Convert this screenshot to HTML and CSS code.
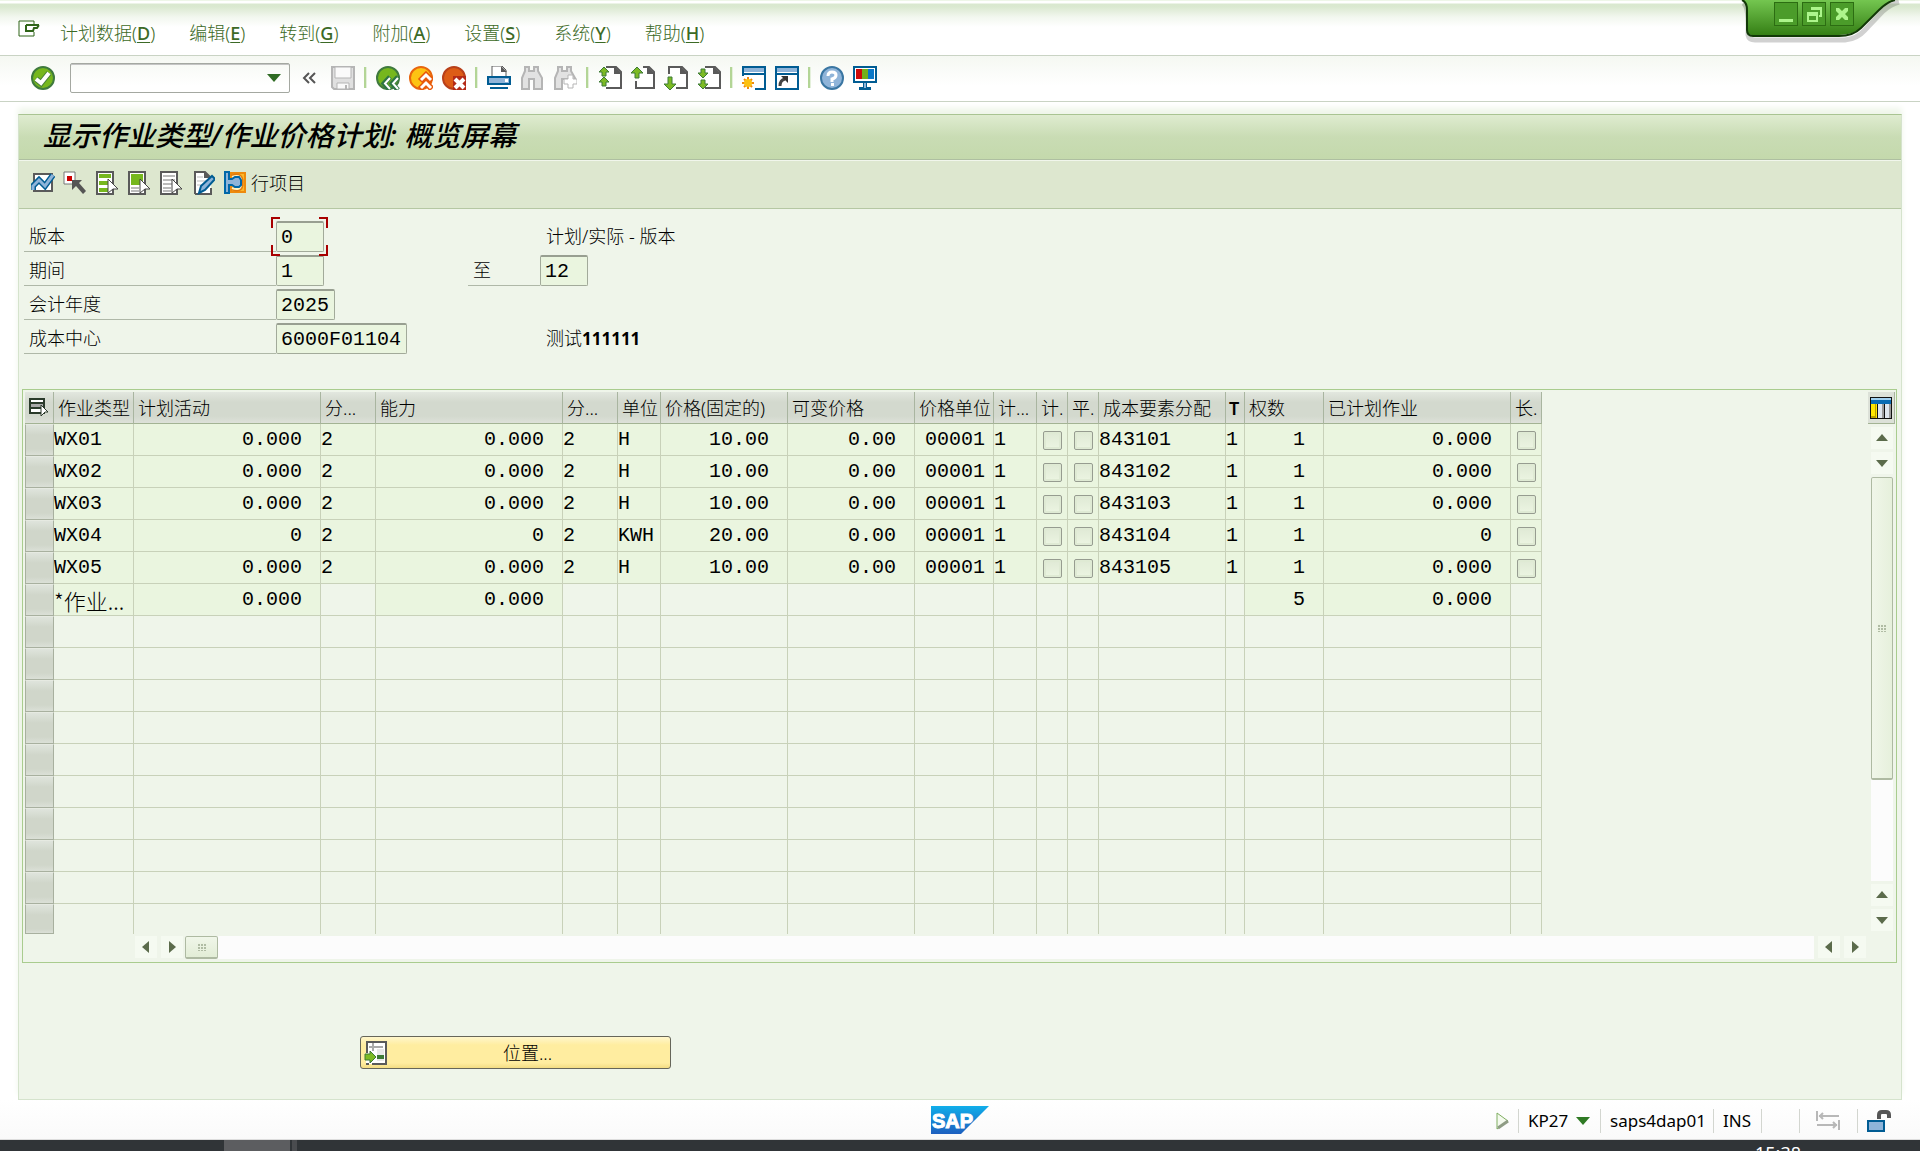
FILE: index.html
```html
<!DOCTYPE html>
<html lang="zh-CN">
<head>
<meta charset="utf-8">
<title>显示作业类型/作业价格计划: 概览屏幕</title>
<link rel="stylesheet" href="styles.css">
</head>
<body>
<header class="menubar">
  <svg class="menu-icon" width="24" height="18" viewBox="0 0 24 18" fill="none" stroke="#2f6418"><path d="M16 5V1H1V16H16V12" stroke-width="1"/><path d="M8 5H21M8 5V11H15L16 8H19L21 5" stroke-width="2"/></svg>
  <nav class="menus">
    <a href="#">计划数据(<u>D</u>)</a><a href="#">编辑(<u>E</u>)</a><a href="#">转到(<u>G</u>)</a><a href="#">附加(<u>A</u>)</a><a href="#">设置(<u>S</u>)</a><a href="#">系统(<u>Y</u>)</a><a href="#">帮助(<u>H</u>)</a>
  </nav>
  <div class="window-controls">
    <svg class="window-shape" width="180" height="44" viewBox="0 0 180 44">
      <defs><linearGradient id="tab" x1="0" y1="0" x2="0" y2="1"><stop offset="0" stop-color="#74c650"/><stop offset="1" stop-color="#357f15"/></linearGradient></defs>
      <path d="M4 3Q10 6 9 35Q10 40 16 40H106Q118 39 126 30L144 11Q152 4 160 2" fill="none" stroke="#000" stroke-opacity=".18" stroke-width="5"/>
      <path d="M3 0Q8 2 8 10V30Q8 35 13 35H100Q114 35 122 28L140 10Q148 2 156 0Z" fill="url(#tab)"/>
      <path d="M3 0Q8 2 8 10V30Q8 36 14 36H100Q114 36 122 28L140 10Q148 2 156 0" fill="none" stroke="#123907" stroke-width="2"/>
    </svg>
    <div class="window-buttons">
      <button type="button" aria-label="最小化"><svg width="22" height="22" viewBox="0 0 22 22"><path d="M4 16H18V19H4Z"/></svg></button>
      <button type="button" aria-label="还原"><svg width="22" height="22" viewBox="0 0 22 22"><path d="M8 4H19V14H16V12H17V7H8Z"/><path d="M4 9H15V19H4ZM6 13V17H13V13Z" fill-rule="evenodd"/></svg></button>
      <button type="button" aria-label="关闭"><svg width="22" height="22" viewBox="0 0 22 22"><path d="M5 5H8L11 8L14 5H17V8L14 11L17 14V17H14L11 14L8 17H5V14L8 11L5 8Z"/></svg></button>
    </div>
  </div>
</header>

<div class="toolbar">
  <button class="tool" type="button" aria-label="回车"><svg width="24" height="24" viewBox="0 0 24 24"><circle cx="12" cy="12" r="11" fill="#76b71e" stroke="#3f7a3e" stroke-width="2"/><path d="M5 13L10 17L18 7" fill="none" stroke="#48803a" stroke-width="6"/><path d="M5 13L10 17L18 7" fill="none" stroke="#fff" stroke-width="4"/></svg></button>
  <div class="command"><input type="text" aria-label="命令"><svg width="14" height="8" viewBox="0 0 14 8"><path d="M0 0H14L7 8Z" fill="#2f6b24"/></svg></div>
  <button class="tool chevron" type="button" aria-label="收起"><svg width="14" height="12" viewBox="0 0 14 12" fill="none" stroke="#555" stroke-width="2"><path d="M7 1L2 6L7 11M13 1L8 6L13 11"/></svg></button>
  <button class="tool save" type="button" aria-label="保存"><svg width="24" height="24" viewBox="0 0 24 24"><path d="M1 1H23V23H3L1 21Z" fill="#e0e0e0" stroke="#b5b5b5" stroke-width="2"/><path d="M4 1H20V12H4ZM6 17H18V23H6Z" fill="#fafafa" stroke="#b5b5b5"/><path d="M15 19V23" stroke="#b5b5b5" stroke-width="2"/></svg></button>
  <span class="sep"></span>
  <button class="tool" type="button" aria-label="返回"><svg width="24" height="24" viewBox="0 0 24 24"><circle cx="12" cy="12" r="11" fill="#76b71e" stroke="#3f7a3e" stroke-width="2"/><path d="M14 11L8 17.500L14 24M22 11L16 17.500L22 24" fill="none" stroke="#2f7544" stroke-width="5"/><path d="M14 12L9 17.500L14 23M22 12L17 17.500L22 23" fill="none" stroke="#fff" stroke-width="2"/></svg></button>
  <button class="tool" type="button" aria-label="退出"><svg width="24" height="24" viewBox="0 0 24 24"><circle cx="12" cy="12" r="11" fill="#fdc313" stroke="#e8650d" stroke-width="2"/><path d="M11 15L17 9L23 15M11 23L17 17L23 23" fill="none" stroke="#e8590b" stroke-width="6"/><path d="M12 14L17 9L22 14M12 22L17 17L22 22" fill="none" stroke="#fff" stroke-width="3"/></svg></button>
  <button class="tool" type="button" aria-label="取消"><svg width="24" height="24" viewBox="0 0 24 24"><circle cx="12" cy="12" r="11" fill="#dd5c16" stroke="#b8401a" stroke-width="2"/><path d="M11 10H24V24H11Z" fill="#b42a17"/><path d="M13 13L22 22M22 13L13 22" stroke="#fff" stroke-width="4"/></svg></button>
  <span class="sep"></span>
  <button class="tool" type="button" aria-label="打印"><svg width="24" height="24" viewBox="0 0 24 24"><path d="M5 11V0H15L19 4V11" fill="#fff" stroke="#5a5a5a" stroke-width="1"/><path d="M14 0L20 6H14Z" fill="#5a5a5a"/><path d="M1 11H23V18H1Z" fill="#8fb4d9" stroke="#005c93" stroke-width="2"/><path d="M18 13H21V16H18Z" fill="#fff"/><path d="M3 21H21V23H3Z" fill="#005c93"/></svg></button>
  <button class="tool" type="button" aria-label="查找"><svg width="24" height="24" viewBox="0 0 24 24"><path d="M5 1H9V5H14V1H18V5L22 12V23H14V13H9V23H2V12L5 5Z" fill="#e2e2e2" stroke="#b5b5b5" stroke-width="2"/></svg></button>
  <button class="tool" type="button" aria-label="查找下一个"><svg width="24" height="24" viewBox="0 0 24 24"><path d="M5 1H9V5H14V1H18V5L22 12V17H14V13H9V23H2V12L5 5Z" fill="#e2e2e2" stroke="#b5b5b5" stroke-width="2"/><path d="M15 9H20V13H24V18H20V22H15V18H11V13H15Z" fill="#fff" stroke="#b5b5b5"/></svg></button>
  <span class="sep"></span>
  <button class="tool" type="button" aria-label="第一页"><svg width="24" height="24" viewBox="0 0 24 24"><path d="M8 1H18L23 6V22H8" fill="#fff" stroke="#5a5a5a" stroke-width="2"/><path d="M16 0L24 8H16Z" fill="#5a5a5a"/><path d="M6 1L11 6H8V10H4V6H1ZM6 11L11 16H8V20H4V16H1Z" fill="#7cba24" stroke="#3d7a36"/></svg></button>
  <button class="tool" type="button" aria-label="上一页"><svg width="24" height="24" viewBox="0 0 24 24"><path d="M12 1H18L23 6V22H5V15" fill="#fff" stroke="#5a5a5a" stroke-width="2"/><path d="M16 0L24 8H16Z" fill="#5a5a5a"/><path d="M6 1L12 7H8V12H4V7H0Z" fill="#7cba24" stroke="#3d7a36"/></svg></button>
  <button class="tool" type="button" aria-label="下一页"><svg width="24" height="24" viewBox="0 0 24 24"><path d="M5 8V1H18L23 6V22H12" fill="#fff" stroke="#5a5a5a" stroke-width="2"/><path d="M16 0L24 8H16Z" fill="#5a5a5a"/><path d="M6 24L12 18H8V11H4V18H0Z" fill="#7cba24" stroke="#3d7a36"/></svg></button>
  <button class="tool" type="button" aria-label="最后一页"><svg width="24" height="24" viewBox="0 0 24 24"><path d="M8 1H18L23 6V22H8" fill="#fff" stroke="#5a5a5a" stroke-width="2"/><path d="M16 0L24 8H16Z" fill="#5a5a5a"/><path d="M6 12L11 7H8V3H4V7H1ZM6 23L11 18H8V14H4V18H1Z" fill="#7cba24" stroke="#3d7a36"/></svg></button>
  <span class="sep"></span>
  <button class="tool" type="button" aria-label="新建会话"><svg width="24" height="24" viewBox="0 0 24 24"><path d="M1 1H23V23H1Z" fill="#fff"/><path d="M1 10V1H23V23H13" fill="none" stroke="#005c93" stroke-width="2"/><path d="M2 2H22V6H2Z" fill="#8fb4d9"/><path d="M1 7H23V9H1Z" fill="#005c93"/><path d="M6 11V23M0 17H12M2 13L10 21M10 13L2 21" stroke="#f08a0c" stroke-width="2"/><circle cx="6" cy="17" r="4" fill="#fcc111"/></svg></button>
  <button class="tool" type="button" aria-label="创建快捷方式"><svg width="24" height="24" viewBox="0 0 24 24"><path d="M1 1H23V23H1Z" fill="#fff" stroke="#005c93" stroke-width="2"/><path d="M2 2H22V6H2Z" fill="#8fb4d9"/><path d="M1 7H23V9H1Z" fill="#005c93"/><path d="M5 20Q5 14 10 13" fill="none" stroke="#444" stroke-width="3"/><path d="M6 10H13V17Z" fill="#333"/></svg></button>
  <span class="sep"></span>
  <button class="tool" type="button" aria-label="帮助"><svg width="24" height="24" viewBox="0 0 24 24"><circle cx="12" cy="12" r="11" fill="#8fb4d9" stroke="#3a76a2" stroke-width="2"/><path d="M8 10Q8 6 12 6Q16 6 16 9Q16 12 12 13V16" fill="none" stroke="#fff" stroke-width="3"/><path d="M11 17H14V20H11Z" fill="#fff"/></svg></button>
  <button class="tool" type="button" aria-label="定制本地布局"><svg width="24" height="24" viewBox="0 0 24 24"><path d="M1 1H23V16H1Z" fill="#fff" stroke="#005c93" stroke-width="2"/><path d="M3 3H9V13H3Z" fill="#cc0a0a"/><path d="M9 3H15V13H9Z" fill="#73b11a"/><path d="M15 3H21V13H15Z" fill="#0a78c8"/><path d="M10 17H14V21H18V24H6V21H10Z" fill="#005c93"/><path d="M11 17H13V22H11Z" fill="#8fb4d9"/></svg></button>
</div>

<main class="screen">
  <h1 class="title">显示作业类型/作业价格计划: 概览屏幕</h1>
  <div class="app-toolbar">
    <button class="tool" type="button" aria-label="图形"><svg width="24" height="24" viewBox="0 0 24 24"><path d="M3 3H21V20H3Z" fill="#fff" stroke="#5a5a5a" stroke-width="2"/><path d="M2 19V15L8 9L14 15L22 4" fill="none" stroke="#005c93" stroke-width="6"/><path d="M2 19V15L8 9L14 15L22 4" fill="none" stroke="#8fb4d9" stroke-width="3"/></svg></button>
    <button class="tool" type="button" aria-label="选择"><svg width="24" height="24" viewBox="0 0 24 24"><path d="M1 1H12V13H1Z" fill="#fff" stroke="#777"/><path d="M4 5H9V10H4Z" fill="#c00"/><path d="M9 9H19L16 12L23 20L20 23L13 15L9 19Z" fill="#555"/></svg></button>
    <button class="tool" type="button" aria-label="全选"><svg width="24" height="24" viewBox="0 0 24 24"><path d="M2 1H18V23H2Z" fill="#fff" stroke="#5a5a5a" stroke-width="2"/><path d="M4 3H16V7H4ZM4 10H16V14H4ZM4 17H13V21H4Z" fill="#76b71e"/><path d="M13 8L23 18H18L13 22Z" fill="#fff" stroke="#444"/></svg></button>
    <button class="tool" type="button" aria-label="选择块"><svg width="24" height="24" viewBox="0 0 24 24"><path d="M2 1H18V23H2Z" fill="#fff" stroke="#5a5a5a" stroke-width="2"/><path d="M4 3H16V14H4Z" fill="#76b71e"/><path d="M4 17H12M4 20H12" stroke="#bbb" stroke-width="2"/><path d="M13 8L23 18H18L13 22Z" fill="#fff" stroke="#444"/></svg></button>
    <button class="tool" type="button" aria-label="取消全选"><svg width="24" height="24" viewBox="0 0 24 24"><path d="M2 1H18V23H2Z" fill="#fff" stroke="#5a5a5a" stroke-width="2"/><path d="M4 5H16M4 9H16M4 13H14M4 17H12M4 20H12" stroke="#bbb" stroke-width="2"/><path d="M13 8L23 18H18L13 22Z" fill="#fff" stroke="#444"/></svg></button>
    <button class="tool" type="button" aria-label="长文本"><svg width="24" height="24" viewBox="0 0 24 24"><path d="M4 1H14L20 7V23H4Z" fill="#fff"/><path d="M4 23V1H14L20 7V10M20 17V23H4" fill="none" stroke="#5a5a5a" stroke-width="2"/><path d="M13 0L20 7H13Z" fill="#5a5a5a"/><path d="M6 6H12M6 10H15M6 14H12" stroke="#bbb"/><path d="M8 22L10 15L21 5L24 8L14 19Z" fill="#8fb4d9" stroke="#005c93" stroke-width="2"/></svg></button>
    <button class="tool tool-text" type="button"><svg width="24" height="24" viewBox="0 0 24 24"><path d="M8 2H22V21H8Z" fill="#fdb92a" stroke="#ee8a0c" stroke-width="2"/><path d="M9 6Q17 3 18 9V14Q17 20 9 17" fill="none" stroke="#e07a10" stroke-width="5"/><path d="M9 6Q17 3 18 9V14Q17 20 9 17" fill="none" stroke="#fff3c0" stroke-width="2"/><path d="M2 1H6V8H9L12 6H16L18 9V14L16 16H12L9 14H6V22H2Z" fill="#8fb4d9" stroke="#0067a8" stroke-width="2"/></svg><span>行项目</span></button>
  </div>

  <form class="params">
    <div class="param"><label class="name" for="version">版本</label><div class="slot"><div class="focus"><input id="version" class="box w-s" type="text" value="0" readonly><svg class="corners" width="57" height="39" viewBox="0 0 57 39" fill="none" stroke="#a80000" stroke-width="2"><path d="M1 11V1H9M48 1H56V11M56 28V38H48M9 38H1V28"/></svg></div></div><span class="note">计划/实际 - 版本</span></div>
    <div class="param"><label class="name" for="from">期间</label><div class="slot"><input id="from" class="box w-s" type="text" value="1" readonly></div><label class="to" for="to">至</label><input id="to" class="box w-s" type="text" value="12" readonly></div>
    <div class="param"><label class="name" for="year">会计年度</label><div class="slot"><input id="year" class="box w-m" type="text" value="2025" readonly></div></div>
    <div class="param"><label class="name" for="center">成本中心</label><div class="slot"><input id="center" class="box w-l" type="text" value="6000F01104" readonly></div><span class="note">测试<b>111111</b></span></div>
  </form>

  <section class="grid-frame">
    <div class="grid-row">
      <div class="grid-view">
        <table class="grid">
          <colgroup><col class="c-sel"><col class="c-80"><col class="c-187"><col class="c-55"><col class="c-187"><col class="c-55"><col class="c-43"><col class="c-127"><col class="c-127"><col class="c-79"><col class="c-43"><col class="c-31"><col class="c-31"><col class="c-127"><col class="c-19"><col class="c-79"><col class="c-187"><col class="c-31"></colgroup>
          <thead><tr><th class="sel"><svg width="20" height="20" viewBox="0 0 20 20"><path d="M1 1H15V5H1ZM1 5H15V10H1ZM1 10H15V15H1Z" fill="#fff" stroke="#2b3b2b" stroke-width="2"/><path d="M2 6H14V9H2Z" fill="#aaa"/><path d="M12 7L19 14H16L12 18Z" fill="#fff" stroke="#2b3b2b"/></svg></th><th>作业类型</th><th>计划活动</th><th>分...</th><th>能力</th><th>分...</th><th>单位</th><th>价格(固定的)</th><th>可变价格</th><th>价格单位</th><th>计...</th><th>计.</th><th>平.</th><th>成本要素分配</th><th class="t">T</th><th>权数</th><th>已计划作业</th><th>长.</th></tr></thead>
          <tbody>
            <tr class="on"><th></th><td>WX01</td><td class="n">0.000</td><td>2</td><td class="n">0.000</td><td>2</td><td>H</td><td class="n">10.00</td><td class="n">0.00</td><td class="u">00001</td><td>1</td><td><input type="checkbox" aria-label="计"></td><td><input type="checkbox" aria-label="平"></td><td>843101</td><td>1</td><td class="n">1</td><td class="n">0.000</td><td><input type="checkbox" aria-label="长"></td></tr>
            <tr class="on"><th></th><td>WX02</td><td class="n">0.000</td><td>2</td><td class="n">0.000</td><td>2</td><td>H</td><td class="n">10.00</td><td class="n">0.00</td><td class="u">00001</td><td>1</td><td><input type="checkbox" aria-label="计"></td><td><input type="checkbox" aria-label="平"></td><td>843102</td><td>1</td><td class="n">1</td><td class="n">0.000</td><td><input type="checkbox" aria-label="长"></td></tr>
            <tr class="on"><th></th><td>WX03</td><td class="n">0.000</td><td>2</td><td class="n">0.000</td><td>2</td><td>H</td><td class="n">10.00</td><td class="n">0.00</td><td class="u">00001</td><td>1</td><td><input type="checkbox" aria-label="计"></td><td><input type="checkbox" aria-label="平"></td><td>843103</td><td>1</td><td class="n">1</td><td class="n">0.000</td><td><input type="checkbox" aria-label="长"></td></tr>
            <tr class="on"><th></th><td>WX04</td><td class="n">0</td><td>2</td><td class="n">0</td><td>2</td><td>KWH</td><td class="n">20.00</td><td class="n">0.00</td><td class="u">00001</td><td>1</td><td><input type="checkbox" aria-label="计"></td><td><input type="checkbox" aria-label="平"></td><td>843104</td><td>1</td><td class="n">1</td><td class="n">0</td><td><input type="checkbox" aria-label="长"></td></tr>
            <tr class="on"><th></th><td>WX05</td><td class="n">0.000</td><td>2</td><td class="n">0.000</td><td>2</td><td>H</td><td class="n">10.00</td><td class="n">0.00</td><td class="u">00001</td><td>1</td><td><input type="checkbox" aria-label="计"></td><td><input type="checkbox" aria-label="平"></td><td>843105</td><td>1</td><td class="n">1</td><td class="n">0.000</td><td><input type="checkbox" aria-label="长"></td></tr>
            <tr><th></th><td class="f sum">*作业...</td><td class="f n">0.000</td><td></td><td class="f n">0.000</td><td></td><td></td><td></td><td></td><td></td><td></td><td></td><td></td><td></td><td></td><td class="f n">5</td><td class="f n">0.000</td><td></td></tr>
            <tr><th></th><td></td><td></td><td></td><td></td><td></td><td></td><td></td><td></td><td></td><td></td><td></td><td></td><td></td><td></td><td></td><td></td><td></td></tr>
            <tr><th></th><td></td><td></td><td></td><td></td><td></td><td></td><td></td><td></td><td></td><td></td><td></td><td></td><td></td><td></td><td></td><td></td><td></td></tr>
            <tr><th></th><td></td><td></td><td></td><td></td><td></td><td></td><td></td><td></td><td></td><td></td><td></td><td></td><td></td><td></td><td></td><td></td><td></td></tr>
            <tr><th></th><td></td><td></td><td></td><td></td><td></td><td></td><td></td><td></td><td></td><td></td><td></td><td></td><td></td><td></td><td></td><td></td><td></td></tr>
            <tr><th></th><td></td><td></td><td></td><td></td><td></td><td></td><td></td><td></td><td></td><td></td><td></td><td></td><td></td><td></td><td></td><td></td><td></td></tr>
            <tr><th></th><td></td><td></td><td></td><td></td><td></td><td></td><td></td><td></td><td></td><td></td><td></td><td></td><td></td><td></td><td></td><td></td><td></td></tr>
            <tr><th></th><td></td><td></td><td></td><td></td><td></td><td></td><td></td><td></td><td></td><td></td><td></td><td></td><td></td><td></td><td></td><td></td><td></td></tr>
            <tr><th></th><td></td><td></td><td></td><td></td><td></td><td></td><td></td><td></td><td></td><td></td><td></td><td></td><td></td><td></td><td></td><td></td><td></td></tr>
            <tr><th></th><td></td><td></td><td></td><td></td><td></td><td></td><td></td><td></td><td></td><td></td><td></td><td></td><td></td><td></td><td></td><td></td><td></td></tr>
            <tr class="last"><th></th><td></td><td></td><td></td><td></td><td></td><td></td><td></td><td></td><td></td><td></td><td></td><td></td><td></td><td></td><td></td><td></td><td></td></tr>
          </tbody>
        </table>
      </div>
      <div class="vscroll">
        <button class="config" type="button" aria-label="表设置"><svg width="22" height="22" viewBox="0 0 22 22"><path d="M0 0H22V22H0Z" fill="#111"/><path d="M1 1H21V3H1Z" fill="#9fd0f0"/><path d="M1 3H21V7H1Z" fill="#0a6cb4"/><path d="M1 7H7V21H1Z" fill="#ffe600"/><path d="M8 7H14V21H8ZM15 7H21V21H15Z" fill="#dfe6ee"/><path d="M6 7V21H1V19H5V7Z" fill="#b8a000"/><path d="M12 7H14V21H12ZM19 7H21V21H19Z" fill="#999"/></svg></button>
        <button class="arrow" type="button" aria-label="向上"><svg width="12" height="8" viewBox="0 0 12 8"><path d="M0 7L6 0L12 7Z"/></svg></button>
        <button class="arrow" type="button" aria-label="向下"><svg width="12" height="8" viewBox="0 0 12 8"><path d="M0 1L6 8L12 1Z"/></svg></button>
        <div class="vtrack"><div class="vthumb"><i class="grip"></i></div></div>
        <button class="arrow" type="button" aria-label="向上翻"><svg width="12" height="8" viewBox="0 0 12 8"><path d="M0 7L6 0L12 7Z"/></svg></button>
        <button class="arrow" type="button" aria-label="向下翻"><svg width="12" height="8" viewBox="0 0 12 8"><path d="M0 1L6 8L12 1Z"/></svg></button>
      </div>
    </div>
    <div class="hscroll">
      <button class="arrow" type="button" aria-label="向左"><svg width="8" height="12" viewBox="0 0 8 12"><path d="M7 0L0 6L7 12Z"/></svg></button>
      <button class="arrow" type="button" aria-label="向右"><svg width="8" height="12" viewBox="0 0 8 12"><path d="M1 0L8 6L1 12Z"/></svg></button>
      <div class="htrack"><div class="hthumb"><i class="grip"></i></div></div>
      <button class="arrow" type="button" aria-label="向左翻"><svg width="8" height="12" viewBox="0 0 8 12"><path d="M7 0L0 6L7 12Z"/></svg></button>
      <button class="arrow" type="button" aria-label="向右翻"><svg width="8" height="12" viewBox="0 0 8 12"><path d="M1 0L8 6L1 12Z"/></svg></button>
    </div>
  </section>

  <button class="position" type="button"><svg width="24" height="24" viewBox="0 0 24 24"><path d="M2 1H22V23H2Z" fill="#fff"/><path d="M3 12V1H22V23H8M2 23H5" fill="none" stroke="#5a5a5a" stroke-width="2"/><path d="M9 2V10M5 6H19" stroke="#aaa" stroke-width="2"/><path d="M13 8H20V20H13Z" fill="#e8e8e8"/><path d="M13 14H20V18H13Z" fill="#3d7a36"/><path d="M1 13H6V10L12 16L6 22V19H1Z" fill="#7cba24" stroke="#3d7a36"/></svg><span>位置...</span></button>
</main>

<footer class="statusbar">
  <svg class="logo" role="img" aria-label="SAP" width="58" height="28" viewBox="0 0 58 28"><defs><linearGradient id="sap" x1="0" y1="0" x2="0" y2="1"><stop offset="0" stop-color="#10aeea"/><stop offset="1" stop-color="#1d5fbf"/></linearGradient></defs><path d="M0 0H58L30 28H0Z" fill="url(#sap)"/><text x="1" y="22" class="logo-text">SAP</text></svg>
  <div class="status">
    <svg class="play" width="14" height="20" viewBox="0 0 14 20"><path d="M1 2L12 10L1 18Z" fill="#f4faee" stroke="#7fae60" stroke-width="1"/><path d="M12 10L2 17" stroke="#8f9c85" stroke-width="3"/></svg>
    <span class="cell tcode">KP27<svg width="14" height="8" viewBox="0 0 14 8"><path d="M0 0H14L7 8Z" fill="#2f7a24"/></svg></span>
    <span class="cell host">saps4dap01</span>
    <span class="cell ins">INS</span>
    <span class="cell blank"></span>
    <span class="cell swap"><svg width="24" height="20" viewBox="0 0 24 20" fill="none" stroke="#b8b8b8" stroke-width="2"><path d="M1 0V10M3 5H23M7 2L4 5L7 8M23 9V19M1 14H21M17 11L20 14L17 17"/></svg></span>
    <span class="cell lock"><svg width="24" height="24" viewBox="0 0 24 24"><path d="M12 10V6Q12 3 15 3H19Q22 3 22 6V9" fill="none" stroke="#555" stroke-width="4"/><path d="M1 12H17V22H1Z" fill="#8fb4d9" stroke="#005c93" stroke-width="2"/></svg></span>
  </div>
</footer>
<div class="taskbar"><span class="task"></span><span class="task-edge"></span><span class="clock">15:38</span></div>
</body>
</html>
```
FILE: styles.css
```css
* { box-sizing: border-box; }
:root {
  --ui: "Noto Sans", "Noto Sans CJK SC", sans-serif;
  --mono: "Liberation Mono", "Noto Sans CJK SC", monospace;
  --line: #c8d1b9;
}
body {
  margin: 0;
  min-height: 100vh;
  display: flex;
  flex-direction: column;
  background: #fff;
  color: #000;
  font: 300 18px/24px var(--ui);
}
button {
  padding: 0;
  border: 0;
  background: none;
  color: inherit;
  font: inherit;
}
svg { display: block; flex: none; }
input { border-radius: 0; margin: 0; font: inherit; }

.menubar {
  position: relative;
  display: flex;
  height: 56px;
  padding: 19px 18px 0;
  border-top: 1px solid #eef6e8;
  border-bottom: 1px solid #c9d3c4;
  background: linear-gradient(#fff 2px, #d9e8cf 3px, #dbe9d1 6px, #f2f7ef 16px, #fff 26px);
}
.menus { display: flex; gap: 34px; padding: 1px 0 0 18px; }
.menus a { color: #3c6a26; text-decoration: none; white-space: nowrap; }
.menus u { font-weight: 500; text-underline-offset: 2px; }

.window-controls { position: absolute; top: -1px; right: 1px; width: 180px; height: 44px; }
.window-shape { position: absolute; inset: 0; }
.window-buttons { position: relative; display: flex; gap: 4px; padding: 2px 0 0 35px; }
.window-buttons button { height: 24px; border: 1px solid #2c6d12; background: #4b9c2a; }
.window-buttons path { fill: #adf58c; }

.toolbar {
  display: flex;
  align-items: center;
  gap: 9px;
  height: 46px;
  padding: 4px 31px 6px;
  border-bottom: 1px solid #c9d3c4;
  background: linear-gradient(#f5f8f2, #fff 30px);
}
.toolbar .sep { width: 3px; height: 21px; background: linear-gradient(90deg, #b3d596 2px, #e4f0db 2px); }
.command {
  display: flex;
  align-items: center;
  width: 220px;
  height: 30px;
  margin-left: 6px;
  padding-right: 8px;
  border: 1px solid #a4a8a1;
  border-radius: 2px;
  box-shadow: inset 0 1px #c4c4c4;
}
.command input { flex: 1; min-width: 0; height: 26px; border: 0; background: none; outline: 0; }
.chevron { margin-left: 3px; }
.save { margin-left: 6px; }

.screen {
  flex: 1;
  display: flex;
  flex-direction: column;
  align-items: stretch;
  margin: 12px 18px 0;
  border: 1px solid #d5e3cd;
  border-top-color: #a9c492;
  background: #eff5ea;
  box-shadow: 0 -6px 6px #eff6ea;
}
.title {
  margin: 0;
  height: 45px;
  padding: 3px 24px 0;
  border-bottom: 1px solid #aebfa1;
  background: linear-gradient(#dfecd0, #c9dcb4 50%, #c4d9ac);
  font: italic 500 28px/34px "Noto Sans", "Noto Sans CJK SC", sans-serif;
}
.app-toolbar {
  display: flex;
  align-items: center;
  gap: 8px;
  height: 49px;
  padding: 0 12px 4px;
  border-top: 1px solid #f1f6ec;
  border-bottom: 1px solid #b5c7a3;
  background: #dde7cf;
}
.tool-text { display: flex; align-items: center; gap: 4px; }

.params { display: flex; flex-direction: column; gap: 3px; padding: 12px 0 0 5px; }
.param { display: flex; height: 31px; line-height: 30px; }
.name, .to { padding-left: 5px; border-bottom: 1px solid #afb8a8; }
.name { width: 252px; }
.to { width: 72px; }
.slot { width: 192px; }
.note { padding-left: 78px; }
.note b { font: 700 17px/30px "Noto Sans", sans-serif; }
.box {
  display: block;
  height: 31px;
  padding: 0 4px;
  border: 1px solid #a2aa9a;
  border-top: 2px solid #989f91;
  border-radius: 2px;
  outline: 0;
  background: #eaf5df;
  font: 20px/28px var(--mono);
}
.w-s { width: 48px; }
.w-m { width: 59px; }
.w-l { width: 131px; }
.focus { position: relative; width: 48px; }
.corners { position: absolute; left: -5px; top: -4px; }

.grid-frame {
  margin: 35px 4px 0 3px;
  padding: 2px 1px 3px 2px;
  border: 1px solid #a9cc8e;
}
.grid-row { display: flex; justify-content: space-between; }
.grid-view { min-width: 0; overflow: hidden; }
.grid { width: 1517px; table-layout: fixed; border-collapse: separate; border-spacing: 0; }
.c-sel { width: 29px; }
.c-19 { width: 19px; }
.c-31 { width: 31px; }
.c-43 { width: 43px; }
.c-55 { width: 55px; }
.c-79 { width: 79px; }
.c-80 { width: 80px; }
.c-127 { width: 127px; }
.c-187 { width: 187px; }
.grid th, .grid td { height: 32px; padding: 0; text-align: left; white-space: nowrap; overflow: hidden; }
.grid thead th {
  padding-left: 4px;
  border-right: 1px solid #a9b5a0;
  border-bottom: 1px solid #a3b394;
  background: linear-gradient(#e2e7df, #d3d9ce 10px, #d3d9ce 24px, #dde1d9);
  font-weight: 300;
}
.grid thead .t { padding-left: 3px; font-weight: 600; }
.grid tbody th {
  border: 1px solid #a8b09f;
  border-top-color: #e6eae2;
  background: linear-gradient(#dfe4dc, #d0d6ca 10px, #d0d6ca 24px, #dbe0d7);
}
.grid td {
  padding-top: 1px;
  border-right: 1px solid var(--line);
  border-bottom: 1px solid var(--line);
  font: 20px/30px var(--mono);
}
.grid .on td, .grid .f { background: #eaf5df; }
.grid .n { padding-right: 18px; text-align: right; }
.grid .u { padding-right: 8px; text-align: right; }
.grid .sum { padding-top: 0; font: 300 22px/28px "Noto Sans CJK SC", sans-serif; }
.grid .last th, .grid .last td { height: 30px; padding: 0; }
.grid .last td { border-bottom: 0; }
.grid input {
  appearance: none;
  display: block;
  width: 19px;
  height: 19px;
  margin: 0 0 0 6px;
  border: 1px solid #969c90;
  border-radius: 2px;
  background: linear-gradient(#dfe9d5, #ecf5e2);
  box-shadow: inset 0 0 0 2px #dfead4;
}

.vscroll { display: flex; flex-direction: column; align-items: center; width: 27px; padding-bottom: 3px; }
.config {
  display: grid;
  place-items: center;
  width: 27px;
  height: 32px;
  border-right: 1px solid #a9b5a0;
  border-bottom: 1px solid #a3b394;
  background: #dce1d8;
}
.arrow { display: grid; place-items: center; width: 22px; height: 22px; background: #f5faf1; }
.arrow path { fill: #5b6b4b; }
.vscroll .arrow { margin-top: 3px; }
.vtrack { flex: 1; width: 22px; margin-top: 3px; background: #fcfcfc; }
.vthumb, .hthumb { display: grid; place-items: center; border: 1px solid #aebaa2; border-radius: 2px; }
.vthumb { height: 75%; background: linear-gradient(90deg, #f0f6e9, #e6f0dc); border-bottom-width: 2px; }
.grip {
  width: 8px;
  height: 8px;
  background: repeating-linear-gradient(#eaf2e0 0 1px, transparent 1px 3px), repeating-linear-gradient(90deg, #b0bca4 0 2px, transparent 2px 3px);
}
.hscroll { display: flex; gap: 4px; height: 23px; margin-top: 2px; padding: 0 29px 0 110px; }
.htrack { flex: 1; margin-left: -2px; background: #fcfcfc; }
.hthumb { width: 33px; height: 23px; background: linear-gradient(#f0f6e9, #e2edd6); border-bottom-width: 2px; }

.position {
  display: flex;
  align-items: center;
  width: 311px;
  height: 33px;
  margin: 73px 0 24px 341px;
  padding: 0 3px;
  border: 1px solid #66665a;
  border-radius: 3px;
  background: linear-gradient(#fff6cc, #ffeda0 8px, #ffeda0 26px, #f3dc83);
}
.position span { flex: 1; text-align: center; }

.statusbar {
  position: relative;
  display: grid;
  grid-template-columns: 1fr auto 1fr;
  align-items: center;
  height: 40px;
  border-bottom: 1px solid #ddd;
  background: linear-gradient(#fff, #fafafa);
}
.logo { grid-column: 2; }
.logo-text { font: 700 20px "Liberation Sans", sans-serif; fill: #fff; stroke: #fff; stroke-width: 1px; }
.status { display: flex; justify-content: flex-end; align-items: center; padding: 2px 18px 0 0; line-height: 24px; font-size: 17px; font-weight: 400; }
.cell { display: flex; align-items: center; height: 24px; padding-left: 9px; border-left: 1px solid #d3d6d0; }
.play { margin-right: 8px; }
.tcode { width: 82px; gap: 8px; }
.host { width: 113px; }
.ins { width: 48px; }
.blank { width: 38px; }
.swap { width: 58px; padding-left: 16px; }
.lock { width: 45px; }

.taskbar { display: flex; height: 11px; overflow: hidden; background: #303437; }
.task { width: 66px; margin-left: 224px; background: #5c5d60; }
.task-edge { width: 5px; margin-left: 2px; background: #4a4c4f; }
.clock { margin: 3px 119px 0 auto; color: #fff; font: 400 18px/20px "Noto Sans", sans-serif; }
```
